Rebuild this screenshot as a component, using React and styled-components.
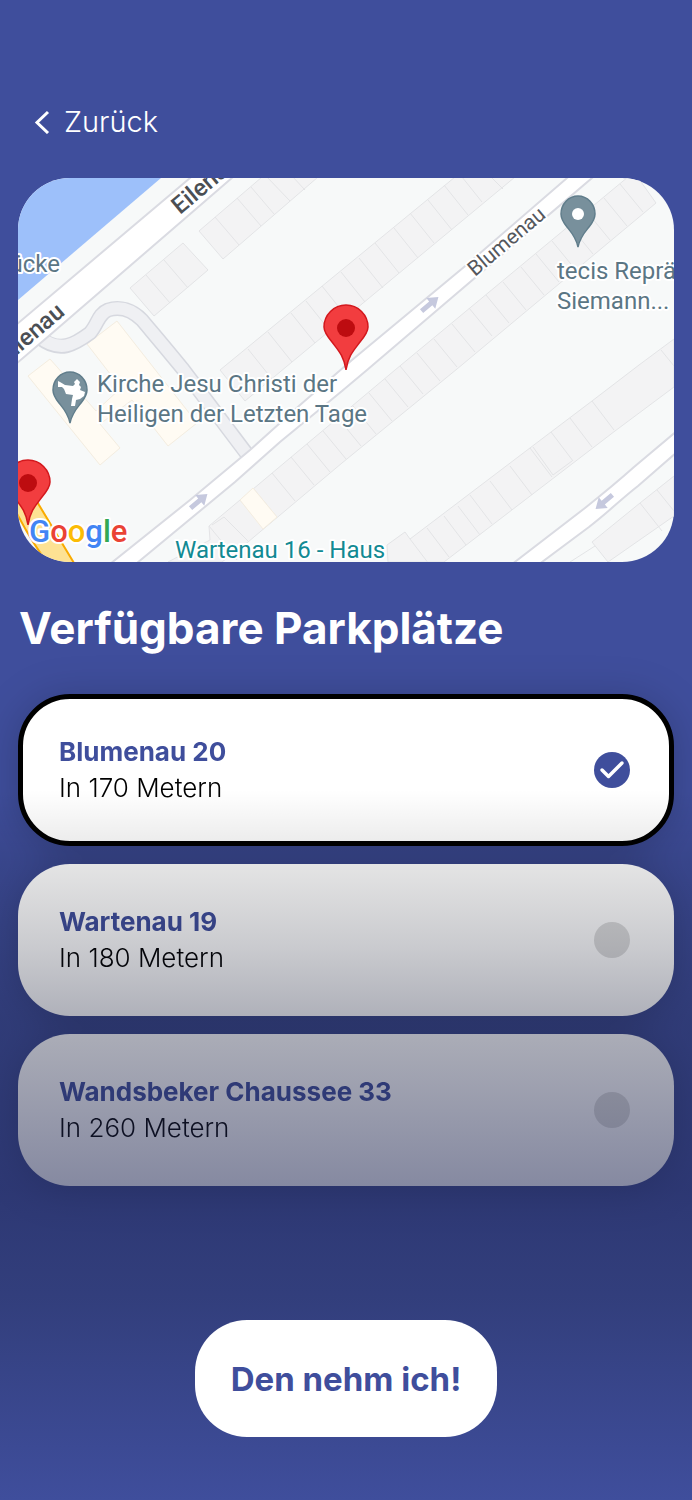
import React, { useState } from "react";
import styled, { createGlobalStyle } from "styled-components";

const blue = "#3f4e9c";

const spots = [
  { id: "blumenau-20", name: "Blumenau 20", distance: 170 },
  { id: "wartenau-19", name: "Wartenau 19", distance: 180 },
  { id: "wandsbeker-33", name: "Wandsbeker Chaussee 33", distance: 260 }
];

const GlobalStyle = createGlobalStyle`
  * {
    box-sizing: border-box;
  }

  body {
    margin: 0;
    background: ${blue};
    font-family: Inter, "Liberation Sans", sans-serif;
  }
`;

const Page = styled.main`
  position: relative;
  display: flex;
  flex-direction: column;
  min-height: 100vh;
  padding: 100px 18px 63px;
  background: ${blue};
`;

const BackButton = styled.button`
  display: flex;
  align-items: center;
  align-self: flex-start;
  gap: 14px;
  height: 44px;
  padding: 0 16px;
  border: 0;
  background: none;
  color: #fff;
  font-family: inherit;
  font-size: 29px;
  font-weight: 300;
  line-height: 44px;
  cursor: pointer;
`;

const MapFrame = styled.div`
  margin-top: 34px;
  border-radius: 52px;
  overflow: hidden;

  > svg {
    display: block;
    width: 100%;
    height: auto;
  }
`;

const Title = styled.h1`
  margin: 40px 0;
  padding-left: 1px;
  color: #fff;
  font-size: 44px;
  font-weight: 700;
  line-height: 52px;
`;

const List = styled.div`
  display: flex;
  flex-direction: column;
  gap: 18px;
  filter: drop-shadow(0 4px 20px rgba(0, 0, 0, 0.2));
`;

const Card = styled.label`
  display: flex;
  align-items: center;
  justify-content: space-between;
  min-height: 152px;
  padding: 0 ${props => (props.$selected ? 39 : 44)}px 0
    ${props => (props.$selected ? 36 : 41)}px;
  border: ${props => (props.$selected ? "5px solid #000" : "0")};
  border-radius: 52px;
  background: #fff;
  cursor: pointer;
`;

const SpotName = styled.div`
  color: ${blue};
  font-size: 26px;
  font-weight: 700;
  line-height: 36px;
`;

const SpotDistance = styled.div`
  color: #000;
  font-size: 26px;
  font-weight: 300;
  line-height: 36px;
`;

const Radio = styled.input`
  appearance: none;
  flex: 0 0 36px;
  height: 36px;
  margin: 0;
  border-radius: 50%;
  background: #dcdcdc;
  cursor: pointer;
`;

const Tick = styled.span`
  position: relative;
  display: flex;

  > ${Radio}:checked {
    background: ${blue};
  }

  > svg {
    position: absolute;
    inset: 0;
    pointer-events: none;
  }
`;

const Fade = styled.div`
  position: absolute;
  right: 0;
  bottom: 0;
  left: 0;
  height: 710px;
  pointer-events: none;
  background: linear-gradient(
    rgba(0, 0, 0, 0) 0%,
    rgba(0, 0, 0, 0.1) 10%,
    rgba(14, 18, 36, 0.22) 22%,
    rgba(20, 25, 51, 0.34) 32%,
    rgba(30, 37, 81, 0.54) 56%,
    rgba(45, 56, 111, 0.7) 72%,
    rgba(60, 74, 148, 0.94) 93%,
    ${blue} 100%
  );
`;

const Footer = styled.footer`
  display: flex;
  justify-content: center;
  margin-top: auto;
`;

const TakeButton = styled.button`
  position: relative;
  height: 117px;
  padding: 0 36px;
  border: 0;
  border-radius: 52px;
  background: #fff;
  color: ${blue};
  font-family: inherit;
  font-size: 33px;
  font-weight: 700;
  line-height: 44px;
  cursor: pointer;
`;

const Label = styled.text`
  font-family: Roboto, "Liberation Sans", sans-serif;
  font-size: ${props => props.$size || 24}px;
  font-weight: ${props => props.$weight || 400};
  fill: ${props => props.$color || "#5b7684"};
  stroke: #fff;
  stroke-width: 4px;
  stroke-linejoin: round;
  paint-order: stroke;
`;

const Houses = styled.path`
  fill: #f3f3f4;
  stroke: #e3e4e6;
  stroke-width: 1px;
`;

const Church = styled(Houses)`
  fill: #fffbf3;
  stroke: #f4ede0;
`;

const Street = styled.path`
  fill: #fff;
  stroke: #dadbe2;
  stroke-width: 2px;
`;

// separators between the terraced houses, each running down-right
const walls = (tops, dx, dy) =>
  tops.map(([x, y]) => `M${x} ${y}l${dx} ${dy}`).join("");

const upperWalls = walls(
  [
    [248, 349], [268, 332], [291, 313], [306, 301], [322, 286], [341, 272],
    [359, 258], [375, 243], [394, 228], [410, 213], [428, 200], [444, 185]
  ],
  24,
  30
);

const lowerWalls = walls(
  [
    [240, 500], [253, 488], [272, 473], [291, 457], [307, 444], [323, 431],
    [338, 418], [353, 406], [369, 393], [385, 379], [400, 366], [417, 353],
    [434, 339], [452, 324], [469, 308], [486, 295], [503, 282], [521, 267],
    [536, 254], [552, 241], [570, 226], [587, 212], [604, 198], [620, 184]
  ],
  23,
  28
);

const eastWalls = walls(
  [
    [592, 401], [570, 418], [551, 432], [530, 448], [510, 466], [490, 481],
    [470, 495], [458, 506], [444, 516], [427, 528], [410, 539]
  ],
  22,
  29
);

const RedPin = ({ x, y }) => (
  <g transform={`translate(${x} ${y})`}>
    <path
      d="M0 42C-2 28-8 22-14 14C-19 8-22 4-22-1a22 22 0 0 1 44 0C22 4 19 8 14 14C8 22 2 28 0 42Z"
      fill="#f23d3f"
      stroke="#d3181d"
      strokeWidth="1.5"
    />
    <circle r="9" fill="#bd0c10" />
  </g>
);

const GrayPin = ({ x, y, children }) => (
  <g transform={`translate(${x} ${y})`}>
    <path
      d="M0 33C-2 23-7 18-11 13C-15 8-17 4-17 0a17 18 0 0 1 34 0C17 4 15 8 11 13C7 18 2 23 0 33Z"
      fill="#78909c"
      stroke="#607d8b"
      strokeWidth="1.5"
    />
    {children}
  </g>
);

const Arrow = ({ x, y, flip }) => (
  <path
    transform={`translate(${x} ${y}) rotate(${flip ? 140 : -40})`}
    d="M-11-2.5H1V-7L11 0L1 7V2.5H-11Z"
    fill="#c6c9de"
  />
);

const ParkingMap = () => (
  <svg viewBox="18 178 656 384" role="img" aria-label="Karte">
    <path d="M18 178h656v384H18Z" fill="#f7f9f9" />
    <path d="M18 178h143L18 300Z" fill="#9dc0fa" />

    <Houses d="M130 288L183 243L208 270L154 316ZM146 275l24 28M164 260l24 28" />
    <Houses d="M199 231L262 177H318L223 259ZM215 217l24 28M237 198l24 28M251 187l23 27M266 176l24 25M292 176l13 14" />
    <Houses d="M220 370L455 177H515L245 401Z" />
    <Houses d={upperWalls + "M462 177l20 25M490 176l13 13"} />
    <Houses d="M209 526L240 500L395 370L634 172L656 203L457 369L342 463L248 542L222 562H168L210 540Z" />
    <Houses d={lowerWalls + "M209 526l28 34M212 525l12-8l25 25"} />
    <Houses d="M410 539L551 432L592 401L639 365L674 339V387L615 431L444 562H388L387 545L405 532ZM661 350l13 16" />
    <Houses d={eastWalls + "M533 447l20 28l19-14"} />
    <Houses d="M592 542L640 503L674 476V516L608 562ZM640 503l22 28M657 490l17 21M570 562l25-16" />
    <Church d="M240 500L253 488L277 517L263 529Z" />
    <Church d="M50 359L28 376L100 465L120 448L100 424L132 400L168 446L197 423L117 321L87 344L121 388L96 411Z" />

    <path
      d="M40 338C60 354 75 344 90 333C98 324 98 314 108 310C120 306 132 310 142 320C152 332 164 346 182 368L250 458"
      fill="none"
      stroke="#d6d8df"
      strokeWidth="15"
    />
    <path
      d="M38 336C60 354 75 344 90 333C98 324 98 314 108 310C120 306 132 310 142 320C152 332 164 346 182 368L252 461"
      fill="none"
      stroke="#eff0f3"
      strokeWidth="12"
    />
    <Street d="M10 330L190 178L200 168L244 168L233 177L50 335L10 369Z" />
    <Street d="M567 178L464 267L352 360L300 405L250 450L190 500L105 568L131 568L235 482L280 442L342 391L367 370L592 178L602 168H579Z" />
    <Street d="M684 425L634 467C615 484 605 492 585 508L507 568H534L589 527C612 509 620 500 638 486L684 446Z" />
    <path
      d="M10 480L25 480L39 505L77 568H52C38 552 26 532 10 500Z"
      fill="#fde293"
      stroke="#f9ab00"
      strokeWidth="2"
    />

    <Arrow x={430} y={304} />
    <Arrow x={199} y={501} />
    <Arrow x={604} y={502} flip />

    <Label x="180" y="215" transform="rotate(-40 180 215)" $weight={500} $color="#4b4f54">
      Eilenau
    </Label>
    <Label x="66" y="314" textAnchor="end" transform="rotate(-40 66 314)" $weight={500} $color="#4b4f54">
      Eilenau
    </Label>
    <Label x="475" y="277" transform="rotate(-40 475 277)" $size={21} $color="#55585d">
      Blumenau
    </Label>
    <Label x="60" y="272" textAnchor="end">
      Brücke
    </Label>
    <Label x="557" y="279">
      tecis Repräsentanz
    </Label>
    <Label x="557" y="309">
      Siemann...
    </Label>
    <Label x="97" y="392">
      Kirche Jesu Christi der
    </Label>
    <Label x="97" y="422">
      Heiligen der Letzten Tage
    </Label>
    <Label x="175" y="558" $color="#128a93">
      Wartenau 16 - Haus
    </Label>

    <GrayPin x={578} y={214}>
      <circle r="6" fill="#fff" />
    </GrayPin>
    <GrayPin x={70} y={390}>
      <path
        d="M-12-9L-10-8L-5-5L3-4L5-6L4-8L7-11L10-8L9-5L11-3L10 0L15 2L14 6L10 9L6 10L5 16L1 16L2 9L3 5L-4 4L-6-1L-8-3L-12-3Z"
        fill="#fff"
      />
    </GrayPin>
    <RedPin x={346} y={328} />
    <RedPin x={28} y={483} />

    <Label x="29" y="542" $size={31} $weight={500}>
      <tspan fill="#4285f4">G</tspan>
      <tspan fill="#ea4335">o</tspan>
      <tspan fill="#fbbc05">o</tspan>
      <tspan fill="#4285f4">g</tspan>
      <tspan fill="#34a853">l</tspan>
      <tspan fill="#ea4335">e</tspan>
    </Label>
  </svg>
);

const Spot = ({ spot, selected, onSelect }) => (
  <Card $selected={selected}>
    <div>
      <SpotName>{spot.name}</SpotName>
      <SpotDistance>In {spot.distance} Metern</SpotDistance>
    </div>
    <Tick>
      <Radio
        type="radio"
        name="spot"
        value={spot.id}
        checked={selected}
        onChange={() => onSelect(spot.id)}
      />
      {selected && (
        <svg width="36" height="36" viewBox="0 0 36 36" fill="none">
          <path
            d="M8 18L14.500 24.500L28 11"
            stroke="#fff"
            strokeWidth="3.500"
            strokeLinecap="round"
            strokeLinejoin="round"
          />
        </svg>
      )}
    </Tick>
  </Card>
);

const App = () => {
  const [selectedId, setSelectedId] = useState(spots[0].id);

  return (
    <>
      <GlobalStyle />
      <Page>
        <BackButton type="button">
          <svg width="16" height="24" viewBox="0 0 16 24" fill="none">
            <path d="M14 2L3 12.500L14 23" stroke="#fff" strokeWidth="3" />
          </svg>
          Zurück
        </BackButton>
        <MapFrame>
          <ParkingMap />
        </MapFrame>
        <Title>Verfügbare Parkplätze</Title>
        <List role="radiogroup" aria-label="Verfügbare Parkplätze">
          {spots.map(spot => (
            <Spot
              key={spot.id}
              spot={spot}
              selected={spot.id === selectedId}
              onSelect={setSelectedId}
            />
          ))}
        </List>
        <Fade />
        <Footer>
          <TakeButton type="button">Den nehm ich!</TakeButton>
        </Footer>
      </Page>
    </>
  );
};

export default App;
